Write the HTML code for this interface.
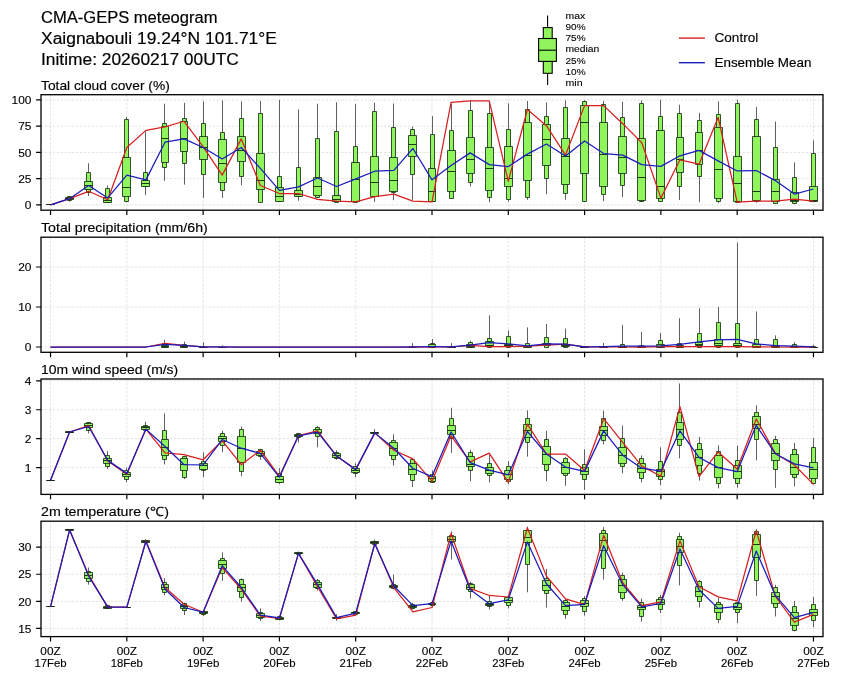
<!DOCTYPE html>
<html><head><meta charset="utf-8"><style>
html,body{margin:0;padding:0;background:#fff;}
svg{display:block;will-change:transform;}
text{font-family:"Liberation Sans",sans-serif;fill:#000;}
</style></head><body>
<svg width="841" height="680" viewBox="0 0 841 680">
<rect width="841" height="680" fill="#fff"/>
<text x="41" y="23" font-size="16.04" text-anchor="start" textLength="176.48" lengthAdjust="spacingAndGlyphs" stroke="#000" stroke-width="0.18">CMA-GEPS meteogram</text>
<text x="41" y="43.7" font-size="16.04" text-anchor="start" textLength="235.9" lengthAdjust="spacingAndGlyphs" stroke="#000" stroke-width="0.18">Xaignabouli 19.24°N 101.71°E</text>
<text x="41" y="64.5" font-size="16.04" text-anchor="start" textLength="197.87" lengthAdjust="spacingAndGlyphs" stroke="#000" stroke-width="0.18">Initime: 20260217 00UTC</text>
<line x1="547.6" y1="15.4" x2="547.6" y2="84.9" stroke="#000" stroke-width="1.1"/>
<rect x="543.3" y="27.6" width="8.9" height="45.7" fill="#90f55c" stroke="#000" stroke-width="1.1"/>
<rect x="538.6" y="38.5" width="17.8" height="22.9" fill="#90f55c" stroke="#000" stroke-width="1.1"/>
<line x1="538.6" y1="50.2" x2="556.4" y2="50.2" stroke="#000" stroke-width="1.1"/>
<text x="565.5" y="18.5" font-size="9.48" text-anchor="start" textLength="19.67" lengthAdjust="spacingAndGlyphs" stroke="#000" stroke-width="0.11">max</text>
<text x="565.5" y="29.83" font-size="9.48" text-anchor="start" textLength="20.07" lengthAdjust="spacingAndGlyphs" stroke="#000" stroke-width="0.11">90%</text>
<text x="565.5" y="41.16" font-size="9.48" text-anchor="start" textLength="20.07" lengthAdjust="spacingAndGlyphs" stroke="#000" stroke-width="0.11">75%</text>
<text x="565.5" y="52.49" font-size="9.48" text-anchor="start" textLength="33.85" lengthAdjust="spacingAndGlyphs" stroke="#000" stroke-width="0.11">median</text>
<text x="565.5" y="63.82" font-size="9.48" text-anchor="start" textLength="20.07" lengthAdjust="spacingAndGlyphs" stroke="#000" stroke-width="0.11">25%</text>
<text x="565.5" y="75.15" font-size="9.48" text-anchor="start" textLength="20.07" lengthAdjust="spacingAndGlyphs" stroke="#000" stroke-width="0.11">10%</text>
<text x="565.5" y="86.48" font-size="9.48" text-anchor="start" textLength="17.03" lengthAdjust="spacingAndGlyphs" stroke="#000" stroke-width="0.11">min</text>
<line x1="678.9" y1="38.1" x2="704.9" y2="38.1" stroke="#d81f1f" stroke-width="1.4"/>
<line x1="678.9" y1="62.7" x2="704.9" y2="62.7" stroke="#1c1cbe" stroke-width="1.4"/>
<text x="714.5" y="42.4" font-size="12.71" text-anchor="start" textLength="43.74" lengthAdjust="spacingAndGlyphs" stroke="#000" stroke-width="0.15">Control</text>
<text x="714.5" y="66.8" font-size="12.71" text-anchor="start" textLength="96.92" lengthAdjust="spacingAndGlyphs" stroke="#000" stroke-width="0.15">Ensemble Mean</text>
<text x="41" y="89.8" font-size="12.77" text-anchor="start" textLength="128.79" lengthAdjust="spacingAndGlyphs" stroke="#000" stroke-width="0.15">Total cloud cover (%)</text>
<path d="M41 204.95H823M41 178.7H823M41 152.45H823M41 126.2H823M41 99.95H823M50.54 94.7V210.2M126.83 94.7V210.2M203.12 94.7V210.2M279.41 94.7V210.2M355.71 94.7V210.2M432 94.7V210.2M508.29 94.7V210.2M584.59 94.7V210.2M660.88 94.7V210.2M737.17 94.7V210.2M813.46 94.7V210.2" stroke="#d9d9d9" stroke-width="0.75" stroke-dasharray="2.4 1.5" fill="none"/>
<path d="M50.5 204.95V204.95M69.5 196.02V201.8M88.5 163.26V196.02M107.5 185.52V202.85M126.5 117.06V202.32M145.5 131.45V195.08M164.5 103.73V180.8M184.5 102.78V184.58M203.5 101.42V197.91M222.5 100.37V197.91M241.5 101.42V185.21M260.5 101V202.11M279.5 99.95V202.11M298.5 109.4V200.75M317.5 103.73V197.91M336.5 102.26V202.11M355.5 104.15V202.11M374.5 102.78V201.8M393.5 103.41V200.22M412.5 126.62V199.8M432.5 116.12V202.11M451.5 103.73V198.86M470.5 99.95V186.47M489.5 101V202.11M508.5 103.41V201.69M527.5 101V199.8M546.5 102.26V194.13M565.5 100.37V199.8M584.5 100.37V202.11M603.5 101V201.17M622.5 101.84V196.97M641.5 100.37V202.11M660.5 99.95V201.48M679.5 104.78V200.12M699.5 112.86V202.11M718.5 101.31V203.16M737.5 99.95V202.74M756.5 106.77V202.74M775.5 121.47V203.16M794.5 162.42V204.11M813.5 140.27V202.11" stroke="#606060" stroke-width="1" fill="none"/>
<path d="M48.5 204.5H52.5V204.5H48.5ZM67.5 196.5H71.5V200.5H67.5ZM86.5 172.5H90.5V192.5H86.5ZM105.5 188.5H109.5V202.5H105.5ZM124.5 119.5H128.5V201.5H124.5ZM143.5 172.5H147.5V186.5H143.5ZM162.5 123.5H166.5V167.5H162.5ZM182.5 118.5H186.5V163.5H182.5ZM201.5 123.5H205.5V174.5H201.5ZM220.5 132.5H224.5V190.5H220.5ZM239.5 118.5H243.5V176.5H239.5ZM258.5 113.5H262.5V202.5H258.5ZM277.5 176.5H281.5V201.5H277.5ZM296.5 167.5H300.5V196.5H296.5ZM315.5 138.5H319.5V197.5H315.5ZM334.5 131.5H338.5V202.5H334.5ZM353.5 146.5H357.5V202.5H353.5ZM372.5 111.5H376.5V196.5H372.5ZM391.5 127.5H395.5V192.5H391.5ZM410.5 129.5H414.5V174.5H410.5ZM430.5 134.5H434.5V201.5H430.5ZM449.5 130.5H453.5V198.5H449.5ZM468.5 110.5H472.5V182.5H468.5ZM487.5 113.5H491.5V197.5H487.5ZM506.5 129.5H510.5V199.5H506.5ZM525.5 109.5H529.5V197.5H525.5ZM544.5 116.5H548.5V178.5H544.5ZM563.5 107.5H567.5V193.5H563.5ZM582.5 101.5H586.5V201.5H582.5ZM601.5 104.5H605.5V194.5H601.5ZM620.5 117.5H624.5V185.5H620.5ZM639.5 103.5H643.5V201.5H639.5ZM658.5 116.5H662.5V201.5H658.5ZM677.5 113.5H681.5V186.5H677.5ZM697.5 120.5H701.5V176.5H697.5ZM716.5 114.5H720.5V201.5H716.5ZM735.5 103.5H739.5V202.5H735.5ZM754.5 119.5H758.5V201.5H754.5ZM773.5 147.5H777.5V203.5H773.5ZM792.5 177.5H796.5V203.5H792.5ZM811.5 153.5H815.5V201.5H811.5Z" stroke="#0d260d" stroke-width="0.8" fill="#90f55c"/>
<path d="M46.5 204.5H54.5V204.5H46.5ZM65.5 197.5H73.5V199.5H65.5ZM84.5 181.5H92.5V189.5H84.5ZM103.5 197.5H111.5V202.5H103.5ZM122.5 157.5H130.5V196.5H122.5ZM141.5 180.5H149.5V186.5H141.5ZM161.5 126.5H168.5V162.5H161.5ZM180.5 121.5H187.5V151.5H180.5ZM199.5 136.5H207.5V159.5H199.5ZM218.5 139.5H226.5V182.5H218.5ZM237.5 136.5H245.5V161.5H237.5ZM256.5 153.5H264.5V189.5H256.5ZM275.5 187.5H283.5V201.5H275.5ZM294.5 190.5H302.5V196.5H294.5ZM313.5 177.5H321.5V195.5H313.5ZM332.5 195.5H340.5V201.5H332.5ZM351.5 162.5H359.5V201.5H351.5ZM370.5 156.5H378.5V196.5H370.5ZM389.5 157.5H397.5V191.5H389.5ZM408.5 135.5H416.5V156.5H408.5ZM428.5 168.5H435.5V201.5H428.5ZM447.5 150.5H455.5V191.5H447.5ZM466.5 137.5H474.5V173.5H466.5ZM485.5 147.5H493.5V190.5H485.5ZM504.5 146.5H512.5V186.5H504.5ZM523.5 122.5H531.5V180.5H523.5ZM542.5 124.5H550.5V165.5H542.5ZM561.5 138.5H569.5V184.5H561.5ZM580.5 105.5H588.5V173.5H580.5ZM599.5 122.5H607.5V186.5H599.5ZM618.5 136.5H626.5V173.5H618.5ZM637.5 138.5H645.5V200.5H637.5ZM656.5 130.5H664.5V198.5H656.5ZM676.5 137.5H683.5V172.5H676.5ZM695.5 132.5H702.5V164.5H695.5ZM714.5 127.5H722.5V198.5H714.5ZM733.5 156.5H741.5V201.5H733.5ZM752.5 136.5H760.5V200.5H752.5ZM771.5 179.5H779.5V201.5H771.5ZM790.5 192.5H798.5V201.5H790.5ZM809.5 186.5H817.5V201.5H809.5Z" stroke="#0d260d" stroke-width="0.8" fill="#90f55c"/>
<path d="M46.5 204.5H54.5M65.5 198.5H73.5M84.5 185.5H92.5M103.5 200.5H111.5M122.5 187.5H130.5M141.5 183.5H149.5M161.5 138.5H168.5M180.5 138.5H187.5M199.5 147.5H207.5M218.5 163.5H226.5M237.5 150.5H245.5M256.5 180.5H264.5M275.5 196.5H283.5M294.5 194.5H302.5M313.5 186.5H321.5M332.5 199.5H340.5M351.5 179.5H359.5M370.5 182.5H378.5M389.5 180.5H397.5M408.5 144.5H416.5M428.5 191.5H435.5M447.5 171.5H455.5M466.5 159.5H474.5M485.5 168.5H493.5M504.5 178.5H512.5M523.5 155.5H531.5M542.5 139.5H550.5M561.5 156.5H569.5M580.5 122.5H588.5M599.5 154.5H607.5M618.5 157.5H626.5M637.5 177.5H645.5M656.5 186.5H664.5M676.5 159.5H683.5M695.5 150.5H702.5M714.5 169.5H722.5M733.5 183.5H741.5M752.5 191.5H760.5M771.5 191.5H779.5M790.5 200.5H798.5M809.5 200.5H817.5" stroke="#0d260d" stroke-width="0.9" fill="none"/>
<polyline points="50.54,204.95 69.61,198.65 88.68,191.3 107.76,199.7 126.83,147.51 145.9,130.4 164.98,126.93 184.05,121.26 203.12,146.57 222.2,175.13 241.27,138.9 260.34,185.52 279.41,193.5 298.49,193.5 317.56,199.28 336.63,201.17 355.71,201.8 374.78,196.55 393.85,194.13 412.93,201.17 432,201.8 451.07,102.26 470.15,100.89 489.22,100.89 508.29,181.32 527.37,109.5 546.44,125.67 565.51,155.07 584.59,105.62 603.66,105.62 622.73,123.68 641.8,142.79 660.88,198.12 679.95,159.8 699.02,164.21 718.1,117.48 737.17,202.11 756.24,201.17 775.32,201.17 794.39,199.07 813.46,201.17" stroke="#d81f1f" stroke-width="1.25" fill="none" stroke-linejoin="round"/>
<polyline points="50.54,204.95 69.61,198.65 88.68,185.52 107.76,197.91 126.83,175.13 145.9,179.85 164.98,142.16 184.05,138.9 203.12,147.51 222.2,158.96 241.27,147.51 260.34,168.41 279.41,190.35 298.49,186.89 317.56,177.96 336.63,186.47 355.71,178.91 374.78,171.24 393.85,170.3 412.93,148.46 432,179.85 451.07,165.57 470.15,152.87 489.22,164.63 508.29,166.52 527.37,154.13 546.44,144.05 565.51,156.02 584.59,140.9 603.66,153.6 622.73,155.07 641.8,164.63 660.88,166.41 679.95,155.81 699.02,150.35 718.1,160.85 737.17,170.93 756.24,170.51 775.32,180.59 794.39,194.03 813.46,188.99" stroke="#1c1cbe" stroke-width="1.25" fill="none" stroke-linejoin="round"/>
<rect x="41" y="94.7" width="782" height="115.5" fill="none" stroke="#000" stroke-width="1.3"/>
<text x="31.4" y="209.15" font-size="11.11" text-anchor="end" textLength="6.62" lengthAdjust="spacingAndGlyphs" stroke="#000" stroke-width="0.12">0</text>
<text x="31.4" y="182.9" font-size="11.11" text-anchor="end" textLength="13.23" lengthAdjust="spacingAndGlyphs" stroke="#000" stroke-width="0.12">25</text>
<text x="31.4" y="156.65" font-size="11.11" text-anchor="end" textLength="13.23" lengthAdjust="spacingAndGlyphs" stroke="#000" stroke-width="0.12">50</text>
<text x="31.4" y="130.4" font-size="11.11" text-anchor="end" textLength="13.23" lengthAdjust="spacingAndGlyphs" stroke="#000" stroke-width="0.12">75</text>
<text x="31.4" y="104.15" font-size="11.11" text-anchor="end" textLength="19.85" lengthAdjust="spacingAndGlyphs" stroke="#000" stroke-width="0.12">100</text>
<path d="M36.14 204.95H41M36.14 178.7H41M36.14 152.45H41M36.14 126.2H41M36.14 99.95H41M50.54 210.2V215.06M126.83 210.2V215.06M203.12 210.2V215.06M279.41 210.2V215.06M355.71 210.2V215.06M432 210.2V215.06M508.29 210.2V215.06M584.59 210.2V215.06M660.88 210.2V215.06M737.17 210.2V215.06M813.46 210.2V215.06" stroke="#000" stroke-width="1.2"/>
<text x="41" y="232.3" font-size="12.77" text-anchor="start" textLength="166.78" lengthAdjust="spacingAndGlyphs" stroke="#000" stroke-width="0.15">Total precipitation (mm/6h)</text>
<path d="M41 347H823M41 307H823M41 267H823M50.54 237.2V352.3M126.83 237.2V352.3M203.12 237.2V352.3M279.41 237.2V352.3M355.71 237.2V352.3M432 237.2V352.3M508.29 237.2V352.3M584.59 237.2V352.3M660.88 237.2V352.3M737.17 237.2V352.3M813.46 237.2V352.3" stroke="#d9d9d9" stroke-width="0.75" stroke-dasharray="2.4 1.5" fill="none"/>
<path d="M164.5 339.8V347M184.5 341.6V347M203.5 342.2V347M222.5 345.4V347M412.5 343.2V347M432.5 339V347M451.5 343.2V347M470.5 340.6V347M489.5 315.4V347M508.5 330.4V347M527.5 327.4V347M546.5 324V347M565.5 328.6V347M584.5 345.8V347M603.5 343V347M622.5 324.8V347M641.5 331.8V347M660.5 333V347M679.5 318.2V347M699.5 308.2V347M718.5 307V347M737.5 242.6V347M756.5 311.4V347M775.5 335.4V347M794.5 342.2V347M813.5 345V347" stroke="#606060" stroke-width="1" fill="none"/>
<path d="M162.5 343.5H166.5V347.5H162.5ZM182.5 344.5H186.5V347.5H182.5ZM201.5 346.5H205.5V347.5H201.5ZM220.5 347.5H224.5V347.5H220.5ZM410.5 346.5H414.5V347.5H410.5ZM430.5 343.5H434.5V347.5H430.5ZM449.5 346.5H453.5V347.5H449.5ZM468.5 342.5H472.5V347.5H468.5ZM487.5 338.5H491.5V347.5H487.5ZM506.5 336.5H510.5V347.5H506.5ZM525.5 343.5H529.5V347.5H525.5ZM544.5 337.5H548.5V347.5H544.5ZM563.5 338.5H567.5V347.5H563.5ZM582.5 346.5H586.5V347.5H582.5ZM601.5 346.5H605.5V347.5H601.5ZM620.5 344.5H624.5V347.5H620.5ZM639.5 345.5H643.5V347.5H639.5ZM658.5 340.5H662.5V347.5H658.5ZM677.5 343.5H681.5V347.5H677.5ZM697.5 333.5H701.5V347.5H697.5ZM716.5 322.5H720.5V347.5H716.5ZM735.5 323.5H739.5V347.5H735.5ZM754.5 339.5H758.5V347.5H754.5ZM773.5 339.5H777.5V347.5H773.5ZM792.5 344.5H796.5V347.5H792.5ZM811.5 346.5H815.5V347.5H811.5Z" stroke="#0d260d" stroke-width="0.8" fill="#90f55c"/>
<path d="M161.5 345.5H168.5V347.5H161.5ZM180.5 345.5H187.5V347.5H180.5ZM199.5 347.5H207.5V347.5H199.5ZM218.5 347.5H226.5V347.5H218.5ZM408.5 347.5H416.5V347.5H408.5ZM428.5 344.5H435.5V347.5H428.5ZM447.5 347.5H455.5V347.5H447.5ZM466.5 344.5H474.5V347.5H466.5ZM485.5 341.5H493.5V345.5H485.5ZM504.5 344.5H512.5V346.5H504.5ZM523.5 346.5H531.5V347.5H523.5ZM542.5 343.5H550.5V345.5H542.5ZM561.5 344.5H569.5V346.5H561.5ZM580.5 346.5H588.5V347.5H580.5ZM599.5 346.5H607.5V347.5H599.5ZM618.5 346.5H626.5V347.5H618.5ZM637.5 346.5H645.5V347.5H637.5ZM656.5 344.5H664.5V347.5H656.5ZM676.5 345.5H683.5V347.5H676.5ZM695.5 342.5H702.5V345.5H695.5ZM714.5 339.5H722.5V345.5H714.5ZM733.5 343.5H741.5V346.5H733.5ZM752.5 344.5H760.5V347.5H752.5ZM771.5 345.5H779.5V347.5H771.5ZM790.5 346.5H798.5V347.5H790.5ZM809.5 347.5H817.5V347.5H809.5Z" stroke="#0d260d" stroke-width="0.8" fill="#90f55c"/>
<path d="M161.5 346.5H168.5M180.5 346.5H187.5M199.5 347.5H207.5M218.5 347.5H226.5M408.5 347.5H416.5M428.5 347.5H435.5M447.5 347.5H455.5M466.5 346.5H474.5M485.5 345.5H493.5M504.5 345.5H512.5M523.5 346.5H531.5M542.5 344.5H550.5M561.5 345.5H569.5M580.5 347.5H588.5M599.5 347.5H607.5M618.5 347.5H626.5M637.5 347.5H645.5M656.5 346.5H664.5M676.5 346.5H683.5M695.5 344.5H702.5M714.5 343.5H722.5M733.5 345.5H741.5M752.5 346.5H760.5M771.5 346.5H779.5M790.5 346.5H798.5M809.5 347.5H817.5" stroke="#0d260d" stroke-width="0.9" fill="none"/>
<polyline points="50.54,347 69.61,347 88.68,347 107.76,347 126.83,347 145.9,347 164.98,343.4 184.05,345.4 203.12,346.8 222.2,347 241.27,347 260.34,347 279.41,347 298.49,347 317.56,347 336.63,347 355.71,347 374.78,347 393.85,347 412.93,347 432,346.8 451.07,347 470.15,345.4 489.22,346.6 508.29,346.6 527.37,346.2 546.44,345.2 565.51,344.2 584.59,346.8 603.66,346.8 622.73,347 641.8,347 660.88,346.6 679.95,346.6 699.02,346.6 718.1,346.6 737.17,346.6 756.24,346.8 775.32,347 794.39,347 813.46,347" stroke="#d81f1f" stroke-width="1.25" fill="none" stroke-linejoin="round"/>
<polyline points="50.54,347 69.61,347 88.68,347 107.76,347 126.83,347 145.9,347 164.98,344.4 184.05,345.4 203.12,346.8 222.2,346.92 241.27,347 260.34,347 279.41,347 298.49,347 317.56,347 336.63,347 355.71,347 374.78,347 393.85,347 412.93,346.8 432,346.6 451.07,346.8 470.15,345.2 489.22,342.6 508.29,343.88 527.37,345.8 546.44,343.88 565.51,344.2 584.59,346.8 603.66,346.6 622.73,346.2 641.8,346.2 660.88,345.8 679.95,344.32 699.02,341.8 718.1,339.8 737.17,339.4 756.24,343.8 775.32,345.68 794.39,346.2 813.46,346.8" stroke="#1c1cbe" stroke-width="1.25" fill="none" stroke-linejoin="round"/>
<rect x="41" y="237.2" width="782" height="115.1" fill="none" stroke="#000" stroke-width="1.3"/>
<text x="31.4" y="351.2" font-size="11.11" text-anchor="end" textLength="6.62" lengthAdjust="spacingAndGlyphs" stroke="#000" stroke-width="0.12">0</text>
<text x="31.4" y="311.2" font-size="11.11" text-anchor="end" textLength="13.23" lengthAdjust="spacingAndGlyphs" stroke="#000" stroke-width="0.12">10</text>
<text x="31.4" y="271.2" font-size="11.11" text-anchor="end" textLength="13.23" lengthAdjust="spacingAndGlyphs" stroke="#000" stroke-width="0.12">20</text>
<path d="M36.14 347H41M36.14 307H41M36.14 267H41M50.54 352.3V357.16M126.83 352.3V357.16M203.12 352.3V357.16M279.41 352.3V357.16M355.71 352.3V357.16M432 352.3V357.16M508.29 352.3V357.16M584.59 352.3V357.16M660.88 352.3V357.16M737.17 352.3V357.16M813.46 352.3V357.16" stroke="#000" stroke-width="1.2"/>
<text x="41" y="374.1" font-size="12.77" text-anchor="start" textLength="137.25" lengthAdjust="spacingAndGlyphs" stroke="#000" stroke-width="0.15">10m wind speed (m/s)</text>
<path d="M41 467.6H823M41 438.67H823M41 409.74H823M41 380.81H823M50.54 379V494.4M126.83 379V494.4M203.12 379V494.4M279.41 379V494.4M355.71 379V494.4M432 379V494.4M508.29 379V494.4M584.59 379V494.4M660.88 379V494.4M737.17 379V494.4M813.46 379V494.4" stroke="#d9d9d9" stroke-width="0.75" stroke-dasharray="2.4 1.5" fill="none"/>
<path d="M50.5 480.18V480.18M69.5 431.15V432.88M88.5 421.89V433.46M107.5 451.11V469.05M126.5 467.6V482.06M145.5 421.89V430.86M164.5 413.5V464.42M184.5 456.61V479.17M203.5 452.27V477.15M222.5 430.86V452.27M241.5 426.52V476.28M260.5 448.8V459.79M279.5 468.18V484.09M298.5 432.88V442.43M317.5 426.23V447.35M336.5 450.24V459.79M355.5 463.26V477.15M374.5 429.12V434.33M393.5 434.33V465.57M412.5 458.92V486.98M432.5 470.49V482.93M451.5 407.71V452.85M470.5 449.66V481.2M489.5 454.58V482.35M508.5 460.95V484.09M527.5 410.32V456.61M546.5 430.86V481.2M565.5 456.9V485.83M584.5 449.37V489.88M603.5 410.61V444.46M622.5 425.65V473.39M641.5 455.45V482.35M660.5 447.35V485.25M679.5 383.41V458.34M699.5 436.93V480.62M718.5 445.32V488.43M737.5 445.61V487.85M756.5 405.4V460.37M775.5 435.78V487.85M794.5 443.01V486.4M813.5 437.8V484.38" stroke="#606060" stroke-width="1" fill="none"/>
<path d="M48.5 480.5H52.5V480.5H48.5ZM67.5 431.5H71.5V432.5H67.5ZM86.5 422.5H90.5V430.5H86.5ZM105.5 455.5H109.5V466.5H105.5ZM124.5 470.5H128.5V479.5H124.5ZM143.5 425.5H147.5V430.5H143.5ZM162.5 430.5H166.5V459.5H162.5ZM182.5 456.5H186.5V477.5H182.5ZM201.5 461.5H205.5V470.5H201.5ZM220.5 433.5H224.5V445.5H220.5ZM239.5 429.5H243.5V471.5H239.5ZM258.5 449.5H262.5V456.5H258.5ZM277.5 473.5H281.5V482.5H277.5ZM296.5 433.5H300.5V437.5H296.5ZM315.5 427.5H319.5V436.5H315.5ZM334.5 452.5H338.5V458.5H334.5ZM353.5 466.5H357.5V473.5H353.5ZM372.5 432.5H376.5V433.5H372.5ZM391.5 440.5H395.5V459.5H391.5ZM410.5 459.5H414.5V480.5H410.5ZM430.5 474.5H434.5V482.5H430.5ZM449.5 418.5H453.5V438.5H449.5ZM468.5 452.5H472.5V470.5H468.5ZM487.5 463.5H491.5V475.5H487.5ZM506.5 466.5H510.5V481.5H506.5ZM525.5 418.5H529.5V442.5H525.5ZM544.5 439.5H548.5V470.5H544.5ZM563.5 458.5H567.5V475.5H563.5ZM582.5 464.5H586.5V479.5H582.5ZM601.5 418.5H605.5V440.5H601.5ZM620.5 438.5H624.5V466.5H620.5ZM639.5 458.5H643.5V478.5H639.5ZM658.5 461.5H662.5V479.5H658.5ZM677.5 412.5H681.5V445.5H677.5ZM697.5 443.5H701.5V473.5H697.5ZM716.5 451.5H720.5V483.5H716.5ZM735.5 460.5H739.5V483.5H735.5ZM754.5 412.5H758.5V439.5H754.5ZM773.5 439.5H777.5V469.5H773.5ZM792.5 449.5H796.5V477.5H792.5ZM811.5 447.5H815.5V483.5H811.5Z" stroke="#0d260d" stroke-width="0.8" fill="#90f55c"/>
<path d="M46.5 480.5H54.5V480.5H46.5ZM65.5 431.5H73.5V432.5H65.5ZM84.5 423.5H92.5V427.5H84.5ZM103.5 458.5H111.5V463.5H103.5ZM122.5 472.5H130.5V476.5H122.5ZM141.5 426.5H149.5V429.5H141.5ZM161.5 439.5H168.5V455.5H161.5ZM180.5 458.5H187.5V470.5H180.5ZM199.5 463.5H207.5V469.5H199.5ZM218.5 436.5H226.5V441.5H218.5ZM237.5 436.5H245.5V462.5H237.5ZM256.5 451.5H264.5V455.5H256.5ZM275.5 476.5H283.5V482.5H275.5ZM294.5 434.5H302.5V436.5H294.5ZM313.5 429.5H321.5V433.5H313.5ZM332.5 453.5H340.5V457.5H332.5ZM351.5 468.5H359.5V472.5H351.5ZM370.5 432.5H378.5V433.5H370.5ZM389.5 442.5H397.5V455.5H389.5ZM408.5 463.5H416.5V474.5H408.5ZM428.5 476.5H435.5V481.5H428.5ZM447.5 425.5H455.5V434.5H447.5ZM466.5 456.5H474.5V466.5H466.5ZM485.5 467.5H493.5V473.5H485.5ZM504.5 470.5H512.5V479.5H504.5ZM523.5 424.5H531.5V437.5H523.5ZM542.5 446.5H550.5V464.5H542.5ZM561.5 462.5H569.5V473.5H561.5ZM580.5 467.5H588.5V474.5H580.5ZM599.5 426.5H607.5V435.5H599.5ZM618.5 447.5H626.5V463.5H618.5ZM637.5 463.5H645.5V472.5H637.5ZM656.5 469.5H664.5V476.5H656.5ZM676.5 422.5H683.5V439.5H676.5ZM695.5 449.5H702.5V465.5H695.5ZM714.5 455.5H722.5V477.5H714.5ZM733.5 465.5H741.5V478.5H733.5ZM752.5 416.5H760.5V428.5H752.5ZM771.5 443.5H779.5V460.5H771.5ZM790.5 454.5H798.5V474.5H790.5ZM809.5 462.5H817.5V478.5H809.5Z" stroke="#0d260d" stroke-width="0.8" fill="#90f55c"/>
<path d="M46.5 480.5H54.5M65.5 432.5H73.5M84.5 425.5H92.5M103.5 460.5H111.5M122.5 474.5H130.5M141.5 427.5H149.5M161.5 447.5H168.5M180.5 464.5H187.5M199.5 465.5H207.5M218.5 438.5H226.5M237.5 448.5H245.5M256.5 453.5H264.5M275.5 479.5H283.5M294.5 435.5H302.5M313.5 432.5H321.5M332.5 455.5H340.5M351.5 470.5H359.5M370.5 432.5H378.5M389.5 448.5H397.5M408.5 469.5H416.5M428.5 478.5H435.5M447.5 430.5H455.5M466.5 464.5H474.5M485.5 470.5H493.5M504.5 474.5H512.5M523.5 430.5H531.5M542.5 454.5H550.5M561.5 467.5H569.5M580.5 471.5H588.5M599.5 430.5H607.5M618.5 455.5H626.5M637.5 468.5H645.5M656.5 471.5H664.5M676.5 429.5H683.5M695.5 457.5H702.5M714.5 467.5H722.5M733.5 471.5H741.5M752.5 424.5H760.5M771.5 453.5H779.5M790.5 467.5H798.5M809.5 469.5H817.5" stroke="#0d260d" stroke-width="0.9" fill="none"/>
<polyline points="50.54,480.18 69.61,432.02 88.68,425.65 107.76,460.95 126.83,474.25 145.9,429.12 164.98,452.85 184.05,454.58 203.12,459.79 222.2,440.7 241.27,464.71 260.34,450.24 279.41,476.28 298.49,435.49 317.56,430.86 336.63,456.03 355.71,469.63 374.78,432.88 393.85,450.24 412.93,458.92 432,481.2 451.07,435.78 470.15,461.81 489.22,453.14 508.29,482.35 527.37,424.21 546.44,454 565.51,454 584.59,470.49 603.66,418.71 622.73,442.43 641.8,466.15 660.88,476.28 679.95,406.56 699.02,476.57 718.1,451.98 737.17,469.05 756.24,419 775.32,453.42 794.39,465 813.46,484.38" stroke="#d81f1f" stroke-width="1.25" fill="none" stroke-linejoin="round"/>
<polyline points="50.54,480.18 69.61,432.02 88.68,426.52 107.76,460.37 126.83,473.39 145.9,429.12 164.98,446.48 184.05,464.71 203.12,465 222.2,439.54 241.27,448.22 260.34,453.42 279.41,477.15 298.49,435.78 317.56,432.02 336.63,456.03 355.71,469.63 374.78,432.88 393.85,448.22 412.93,468.47 432,476.57 451.07,432.02 470.15,462.68 489.22,470.2 508.29,474.83 527.37,431.44 546.44,454 565.51,467.02 584.59,471.36 603.66,430.86 622.73,455.16 641.8,468.18 660.88,471.07 679.95,430.86 699.02,457.47 718.1,467.6 737.17,471.65 756.24,425.36 775.32,453.71 794.39,463.84 813.46,467.89" stroke="#1c1cbe" stroke-width="1.25" fill="none" stroke-linejoin="round"/>
<rect x="41" y="379" width="782" height="115.4" fill="none" stroke="#000" stroke-width="1.3"/>
<text x="31.4" y="471.8" font-size="11.11" text-anchor="end" textLength="6.62" lengthAdjust="spacingAndGlyphs" stroke="#000" stroke-width="0.12">1</text>
<text x="31.4" y="442.87" font-size="11.11" text-anchor="end" textLength="6.62" lengthAdjust="spacingAndGlyphs" stroke="#000" stroke-width="0.12">2</text>
<text x="31.4" y="413.94" font-size="11.11" text-anchor="end" textLength="6.62" lengthAdjust="spacingAndGlyphs" stroke="#000" stroke-width="0.12">3</text>
<text x="31.4" y="385.01" font-size="11.11" text-anchor="end" textLength="6.62" lengthAdjust="spacingAndGlyphs" stroke="#000" stroke-width="0.12">4</text>
<path d="M36.14 467.6H41M36.14 438.67H41M36.14 409.74H41M36.14 380.81H41M50.54 494.4V499.26M126.83 494.4V499.26M203.12 494.4V499.26M279.41 494.4V499.26M355.71 494.4V499.26M432 494.4V499.26M508.29 494.4V499.26M584.59 494.4V499.26M660.88 494.4V499.26M737.17 494.4V499.26M813.46 494.4V499.26" stroke="#000" stroke-width="1.2"/>
<text x="41" y="516.3" font-size="12.77" text-anchor="start" textLength="127.91" lengthAdjust="spacingAndGlyphs" stroke="#000" stroke-width="0.15">2m temperature (℃)</text>
<path d="M41 628.4H823M41 601.33H823M41 574.27H823M41 547.2H823M50.54 521.2V636.6M126.83 521.2V636.6M203.12 521.2V636.6M279.41 521.2V636.6M355.71 521.2V636.6M432 521.2V636.6M508.29 521.2V636.6M584.59 521.2V636.6M660.88 521.2V636.6M737.17 521.2V636.6M813.46 521.2V636.6" stroke="#d9d9d9" stroke-width="0.75" stroke-dasharray="2.4 1.5" fill="none"/>
<path d="M50.5 606.53V606.53M69.5 529.34V530.42M88.5 567.56V584.66M107.5 604.64V608.91M126.5 606.96V607.29M145.5 539.09V542.87M164.5 578.06V595.11M184.5 602.74V615.08M203.5 610.32V616.06M222.5 552.35V580.87M241.5 578.38V601.77M260.5 608.43V620.82M279.5 615.95V620.28M298.5 551.54V554.78M317.5 578.98V590.51M336.5 614.16V620.82M355.5 611.08V615.41M374.5 539.63V545.58M393.5 574.59V589.43M412.5 602.74V609.45M432.5 600.79V606.75M451.5 531.51V559.38M470.5 581.85V598.57M489.5 595.11V609.45M508.5 595.11V608.43M527.5 526.64V592.3M546.5 568.86V607.51M565.5 598.57V618.87M584.5 596.08V615.68M603.5 527.18V579.52M622.5 572.65V600.79M641.5 598.57V621.74M660.5 594.84V613.03M679.5 532.81V585.37M699.5 580.12V607.56M718.5 597.87V623.15M737.5 601.88V623.15M756.5 529.18V595.92M775.5 584.72V616.49M794.5 600.9V631.21M813.5 596.9V627.21" stroke="#606060" stroke-width="1" fill="none"/>
<path d="M48.5 606.5H52.5V606.5H48.5ZM67.5 529.5H71.5V530.5H67.5ZM86.5 571.5H90.5V581.5H86.5ZM105.5 605.5H109.5V608.5H105.5ZM124.5 607.5H128.5V607.5H124.5ZM143.5 540.5H147.5V542.5H143.5ZM162.5 582.5H166.5V592.5H162.5ZM182.5 603.5H186.5V610.5H182.5ZM201.5 611.5H205.5V614.5H201.5ZM220.5 558.5H224.5V573.5H220.5ZM239.5 579.5H243.5V597.5H239.5ZM258.5 612.5H262.5V618.5H258.5ZM277.5 616.5H281.5V619.5H277.5ZM296.5 552.5H300.5V554.5H296.5ZM315.5 580.5H319.5V588.5H315.5ZM334.5 617.5H338.5V618.5H334.5ZM353.5 611.5H357.5V614.5H353.5ZM372.5 541.5H376.5V544.5H372.5ZM391.5 584.5H395.5V588.5H391.5ZM410.5 604.5H414.5V608.5H410.5ZM430.5 602.5H434.5V605.5H430.5ZM449.5 535.5H453.5V542.5H449.5ZM468.5 583.5H472.5V591.5H468.5ZM487.5 601.5H491.5V606.5H487.5ZM506.5 597.5H510.5V605.5H506.5ZM525.5 530.5H529.5V564.5H525.5ZM544.5 578.5H548.5V593.5H544.5ZM563.5 600.5H567.5V614.5H563.5ZM582.5 598.5H586.5V611.5H582.5ZM601.5 530.5H605.5V568.5H601.5ZM620.5 575.5H624.5V598.5H620.5ZM639.5 602.5H643.5V616.5H639.5ZM658.5 597.5H662.5V609.5H658.5ZM677.5 536.5H681.5V565.5H677.5ZM697.5 581.5H701.5V601.5H697.5ZM716.5 602.5H720.5V619.5H716.5ZM735.5 602.5H739.5V612.5H735.5ZM754.5 531.5H758.5V580.5H754.5ZM773.5 587.5H777.5V607.5H773.5ZM792.5 606.5H796.5V630.5H792.5ZM811.5 604.5H815.5V620.5H811.5Z" stroke="#0d260d" stroke-width="0.8" fill="#90f55c"/>
<path d="M46.5 606.5H54.5V606.5H46.5ZM65.5 529.5H73.5V530.5H65.5ZM84.5 572.5H92.5V578.5H84.5ZM103.5 606.5H111.5V608.5H103.5ZM122.5 607.5H130.5V607.5H122.5ZM141.5 540.5H149.5V542.5H141.5ZM161.5 584.5H168.5V589.5H161.5ZM180.5 605.5H187.5V608.5H180.5ZM199.5 611.5H207.5V613.5H199.5ZM218.5 560.5H226.5V568.5H218.5ZM237.5 584.5H245.5V591.5H237.5ZM256.5 613.5H264.5V617.5H256.5ZM275.5 617.5H283.5V619.5H275.5ZM294.5 552.5H302.5V553.5H294.5ZM313.5 582.5H321.5V587.5H313.5ZM332.5 617.5H340.5V618.5H332.5ZM351.5 612.5H359.5V613.5H351.5ZM370.5 541.5H378.5V543.5H370.5ZM389.5 585.5H397.5V587.5H389.5ZM408.5 605.5H416.5V607.5H408.5ZM428.5 603.5H435.5V604.5H428.5ZM447.5 536.5H455.5V541.5H447.5ZM466.5 584.5H474.5V589.5H466.5ZM485.5 603.5H493.5V605.5H485.5ZM504.5 597.5H512.5V602.5H504.5ZM523.5 530.5H531.5V542.5H523.5ZM542.5 580.5H550.5V590.5H542.5ZM561.5 602.5H569.5V610.5H561.5ZM580.5 600.5H588.5V606.5H580.5ZM599.5 533.5H607.5V550.5H599.5ZM618.5 579.5H626.5V592.5H618.5ZM637.5 605.5H645.5V609.5H637.5ZM656.5 599.5H664.5V604.5H656.5ZM676.5 539.5H683.5V552.5H676.5ZM695.5 586.5H702.5V596.5H695.5ZM714.5 604.5H722.5V612.5H714.5ZM733.5 603.5H741.5V609.5H733.5ZM752.5 534.5H760.5V557.5H752.5ZM771.5 592.5H779.5V603.5H771.5ZM790.5 612.5H798.5V625.5H790.5ZM809.5 609.5H817.5V615.5H809.5Z" stroke="#0d260d" stroke-width="0.8" fill="#90f55c"/>
<path d="M46.5 606.5H54.5M65.5 529.5H73.5M84.5 575.5H92.5M103.5 607.5H111.5M122.5 607.5H130.5M141.5 541.5H149.5M161.5 587.5H168.5M180.5 606.5H187.5M199.5 612.5H207.5M218.5 564.5H226.5M237.5 587.5H245.5M256.5 615.5H264.5M275.5 618.5H283.5M294.5 553.5H302.5M313.5 584.5H321.5M332.5 617.5H340.5M351.5 612.5H359.5M370.5 542.5H378.5M389.5 586.5H397.5M408.5 606.5H416.5M428.5 604.5H435.5M447.5 539.5H455.5M466.5 587.5H474.5M485.5 604.5H493.5M504.5 600.5H512.5M523.5 537.5H531.5M542.5 585.5H550.5M561.5 606.5H569.5M580.5 603.5H588.5M599.5 540.5H607.5M618.5 585.5H626.5M637.5 607.5H645.5M656.5 602.5H664.5M676.5 546.5H683.5M695.5 591.5H702.5M714.5 608.5H722.5M733.5 607.5H741.5M752.5 544.5H760.5M771.5 596.5H779.5M790.5 618.5H798.5M809.5 612.5H817.5" stroke="#0d260d" stroke-width="0.9" fill="none"/>
<polyline points="50.54,606.53 69.61,529.94 88.68,575.19 107.76,607.13 126.83,607.13 145.9,540.93 164.98,587.53 184.05,604.26 203.12,612.22 222.2,567.56 241.27,589.05 260.34,616.06 279.41,618.33 298.49,553.32 317.56,586.72 336.63,618.87 355.71,615.08 374.78,543.42 393.85,587.53 412.93,611.84 432,607.51 451.07,533.35 470.15,588.45 489.22,595.49 508.29,597 527.37,527.72 546.44,576.11 565.51,598.95 584.59,604.64 603.66,535.3 622.73,582.77 641.8,605.61 660.88,601.88 679.95,540.87 699.02,586.77 718.1,596.9 737.17,600.9 756.24,530.75 775.32,596.25 794.39,622.12 813.46,614.43" stroke="#d81f1f" stroke-width="1.25" fill="none" stroke-linejoin="round"/>
<polyline points="50.54,606.53 69.61,529.94 88.68,576.11 107.76,607.13 126.83,607.13 145.9,541.52 164.98,589.05 184.05,607.51 203.12,612.22 222.2,565.66 241.27,587.53 260.34,615.08 279.41,617.95 298.49,553.32 317.56,584.66 336.63,617.57 355.71,613.19 374.78,543.79 393.85,586.02 412.93,605.61 432,603.66 451.07,540.93 470.15,589.43 489.22,603.66 508.29,599.87 527.37,541.9 546.44,583.74 565.51,605.61 584.59,604.26 603.66,545.69 622.73,584.66 641.8,606.91 660.88,603.5 679.95,548.99 699.02,589.81 718.1,608.37 737.17,606.37 756.24,550.99 775.32,595.43 794.39,617.68 813.46,612.43" stroke="#1c1cbe" stroke-width="1.25" fill="none" stroke-linejoin="round"/>
<rect x="41" y="521.2" width="782" height="115.4" fill="none" stroke="#000" stroke-width="1.3"/>
<text x="31.4" y="632.6" font-size="11.11" text-anchor="end" textLength="13.23" lengthAdjust="spacingAndGlyphs" stroke="#000" stroke-width="0.12">15</text>
<text x="31.4" y="605.53" font-size="11.11" text-anchor="end" textLength="13.23" lengthAdjust="spacingAndGlyphs" stroke="#000" stroke-width="0.12">20</text>
<text x="31.4" y="578.47" font-size="11.11" text-anchor="end" textLength="13.23" lengthAdjust="spacingAndGlyphs" stroke="#000" stroke-width="0.12">25</text>
<text x="31.4" y="551.4" font-size="11.11" text-anchor="end" textLength="13.23" lengthAdjust="spacingAndGlyphs" stroke="#000" stroke-width="0.12">30</text>
<path d="M36.14 628.4H41M36.14 601.33H41M36.14 574.27H41M36.14 547.2H41M50.54 636.6V641.46M126.83 636.6V641.46M203.12 636.6V641.46M279.41 636.6V641.46M355.71 636.6V641.46M432 636.6V641.46M508.29 636.6V641.46M584.59 636.6V641.46M660.88 636.6V641.46M737.17 636.6V641.46M813.46 636.6V641.46" stroke="#000" stroke-width="1.2"/>
<text x="50.54" y="654.6" font-size="11.11" text-anchor="middle" textLength="20.36" lengthAdjust="spacingAndGlyphs" stroke="#000" stroke-width="0.12">00Z</text>
<text x="50.54" y="666.75" font-size="11.11" text-anchor="middle" textLength="32.28" lengthAdjust="spacingAndGlyphs" stroke="#000" stroke-width="0.12">17Feb</text>
<text x="126.83" y="654.6" font-size="11.11" text-anchor="middle" textLength="20.36" lengthAdjust="spacingAndGlyphs" stroke="#000" stroke-width="0.12">00Z</text>
<text x="126.83" y="666.75" font-size="11.11" text-anchor="middle" textLength="32.28" lengthAdjust="spacingAndGlyphs" stroke="#000" stroke-width="0.12">18Feb</text>
<text x="203.12" y="654.6" font-size="11.11" text-anchor="middle" textLength="20.36" lengthAdjust="spacingAndGlyphs" stroke="#000" stroke-width="0.12">00Z</text>
<text x="203.12" y="666.75" font-size="11.11" text-anchor="middle" textLength="32.28" lengthAdjust="spacingAndGlyphs" stroke="#000" stroke-width="0.12">19Feb</text>
<text x="279.41" y="654.6" font-size="11.11" text-anchor="middle" textLength="20.36" lengthAdjust="spacingAndGlyphs" stroke="#000" stroke-width="0.12">00Z</text>
<text x="279.41" y="666.75" font-size="11.11" text-anchor="middle" textLength="32.28" lengthAdjust="spacingAndGlyphs" stroke="#000" stroke-width="0.12">20Feb</text>
<text x="355.71" y="654.6" font-size="11.11" text-anchor="middle" textLength="20.36" lengthAdjust="spacingAndGlyphs" stroke="#000" stroke-width="0.12">00Z</text>
<text x="355.71" y="666.75" font-size="11.11" text-anchor="middle" textLength="32.28" lengthAdjust="spacingAndGlyphs" stroke="#000" stroke-width="0.12">21Feb</text>
<text x="432" y="654.6" font-size="11.11" text-anchor="middle" textLength="20.36" lengthAdjust="spacingAndGlyphs" stroke="#000" stroke-width="0.12">00Z</text>
<text x="432" y="666.75" font-size="11.11" text-anchor="middle" textLength="32.28" lengthAdjust="spacingAndGlyphs" stroke="#000" stroke-width="0.12">22Feb</text>
<text x="508.29" y="654.6" font-size="11.11" text-anchor="middle" textLength="20.36" lengthAdjust="spacingAndGlyphs" stroke="#000" stroke-width="0.12">00Z</text>
<text x="508.29" y="666.75" font-size="11.11" text-anchor="middle" textLength="32.28" lengthAdjust="spacingAndGlyphs" stroke="#000" stroke-width="0.12">23Feb</text>
<text x="584.59" y="654.6" font-size="11.11" text-anchor="middle" textLength="20.36" lengthAdjust="spacingAndGlyphs" stroke="#000" stroke-width="0.12">00Z</text>
<text x="584.59" y="666.75" font-size="11.11" text-anchor="middle" textLength="32.28" lengthAdjust="spacingAndGlyphs" stroke="#000" stroke-width="0.12">24Feb</text>
<text x="660.88" y="654.6" font-size="11.11" text-anchor="middle" textLength="20.36" lengthAdjust="spacingAndGlyphs" stroke="#000" stroke-width="0.12">00Z</text>
<text x="660.88" y="666.75" font-size="11.11" text-anchor="middle" textLength="32.28" lengthAdjust="spacingAndGlyphs" stroke="#000" stroke-width="0.12">25Feb</text>
<text x="737.17" y="654.6" font-size="11.11" text-anchor="middle" textLength="20.36" lengthAdjust="spacingAndGlyphs" stroke="#000" stroke-width="0.12">00Z</text>
<text x="737.17" y="666.75" font-size="11.11" text-anchor="middle" textLength="32.28" lengthAdjust="spacingAndGlyphs" stroke="#000" stroke-width="0.12">26Feb</text>
<text x="813.46" y="654.6" font-size="11.11" text-anchor="middle" textLength="20.36" lengthAdjust="spacingAndGlyphs" stroke="#000" stroke-width="0.12">00Z</text>
<text x="813.46" y="666.75" font-size="11.11" text-anchor="middle" textLength="32.28" lengthAdjust="spacingAndGlyphs" stroke="#000" stroke-width="0.12">27Feb</text>
</svg></body></html>
